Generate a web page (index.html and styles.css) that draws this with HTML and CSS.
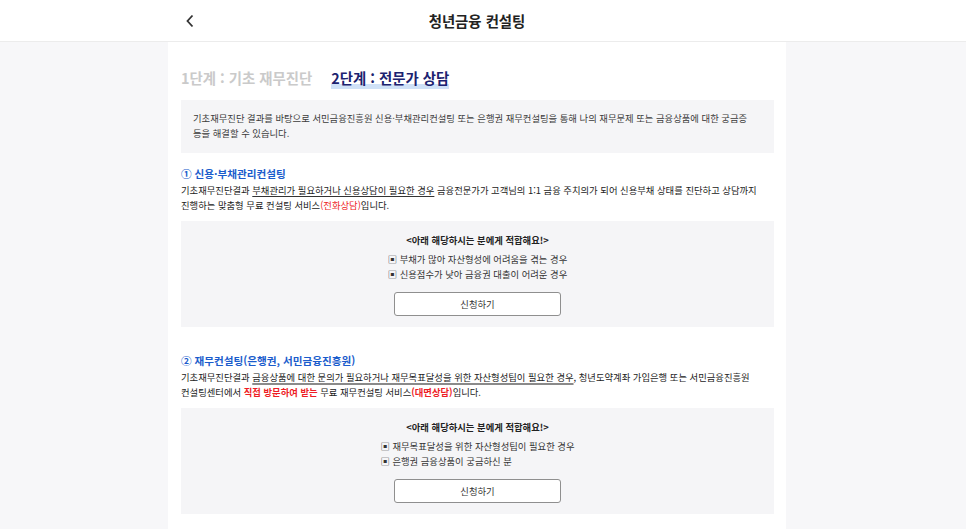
FILE: index.html
```html
<!DOCTYPE html>
<html lang="ko">
<head>
    <meta charset="UTF-8">
    <meta name="viewport" content="width=device-width, initial-scale=1.0">
    <title>청년금융 컨설팅</title>
    <link rel="stylesheet" href="styles.css">
</head>
<body>
    <header class="topbar">
        <div class="topbar-inner">
            <a class="back" href="#" aria-label="뒤로">
                <svg width="10" height="14" viewBox="0 0 10 14"><polyline points="7.5,1.5 2.5,7 7.5,12.5" fill="none" stroke="#333" stroke-width="1.8"/></svg>
            </a>
            <h1>청년금융 컨설팅</h1>
            <span></span>
        </div>
    </header>

    <div class="page">
        <main class="card">
            <div class="tabs">
                <span class="tab">1단계 : 기초 재무진단</span>
                <span class="tab active">2단계 : 전문가 상담</span>
            </div>

            <div class="intro">
                기초재무진단 결과를 바탕으로 서민금융진흥원 신용·부채관리컨설팅 또는 은행권 재무컨설팅을 통해 나의 재무문제 또는 금융상품에 대한 궁금증 등을 해결할 수 있습니다.
            </div>

            <section class="service">
                <h2>① 신용·부채관리컨설팅</h2>
                <p>기초재무진단결과 <u>부채관리가 필요하거나 신용상담이 필요한 경우</u> 금융전문가가 고객님의 1:1 금융 주치의가 되어 신용부채 상태를 진단하고 상담까지 진행하는 맞춤형 무료 컨설팅 서비스<span class="red">(전화상담)</span>입니다.</p>
                <div class="fit-box">
                    <h3>&lt;아래 해당하시는 분에게 적합해요!&gt;</h3>
                    <ul>
                        <li>▣ 부채가 많아 자산형성에 어려움을 겪는 경우</li>
                        <li>▣ 신용점수가 낮아 금융권 대출이 어려운 경우</li>
                    </ul>
                    <button type="button">신청하기</button>
                </div>
            </section>

            <section class="service second">
                <h2>② 재무컨설팅(은행권, 서민금융진흥원)</h2>
                <p>기초재무진단결과 <u class="gray">금융상품에 대한 문의가 필요하거나 재무목표달성을 위한 자산형성팁이 필요한 경우</u>, 청년도약계좌 가입은행 또는 서민금융진흥원 컨설팅센터에서 <span class="red bold">직접 방문하여 받는</span> 무료 재무컨설팅 서비스<span class="red bold">(대면상담)</span>입니다.</p>
                <div class="fit-box">
                    <h3>&lt;아래 해당하시는 분에게 적합해요!&gt;</h3>
                    <ul>
                        <li>▣ 재무목표달성을 위한 자산형성팁이 필요한 경우</li>
                        <li>▣ 은행권 금융상품이 궁금하신 분</li>
                    </ul>
                    <button type="button">신청하기</button>
                </div>
            </section>
        </main>
    </div>
</body>
</html>
```

FILE: styles.css
```css
body {
    margin: 0;
    background-color: #f7f7f9;
    font-family: "Noto Sans CJK KR", "Noto Sans", sans-serif;
    color: #333;
    word-break: keep-all;
}
.topbar {
    background: #fff;
    border-bottom: 1px solid #ececec;
    padding-right: 12px;
}
.topbar-inner {
    width: 618px;
    height: 41px;
    margin: 0 auto;
    padding: 0 17px;
    box-sizing: border-box;
    display: grid;
    grid-template-columns: 1fr auto 1fr;
    align-items: center;
}
.back {
    display: flex;
    align-items: center;
}
.topbar h1 {
    margin: 0;
    font-size: 14.4px;
    font-weight: bold;
    color: #222;
    line-height: 20px;
}
.page {
    padding-right: 12px;
}
.card {
    width: 618px;
    margin: 0 auto;
    background: #fff;
    padding: 27px 12px 40px 13px;
    box-sizing: border-box;
}
.tabs {
    display: flex;
    gap: 19px;
}
.tab {
    display: inline-block;
    font-size: 14.4px;
    font-weight: bold;
    line-height: 18px;
    padding-bottom: 2px;
    color: #cacaca;
}
.tab.active {
    color: #1c2270;
    background: linear-gradient(to top, #cfe1f7 5px, transparent 5px);
}
.intro {
    margin-top: 11px;
    background: #f5f5f7;
    padding: 11px 12px 12px;
    font-size: 9.33px;
    line-height: 15px;
    color: #3a3a3a;
}
.service h2 {
    margin: 13px 0 0;
    font-size: 10.6px;
    line-height: 15px;
    font-weight: bold;
    color: #1a5ccc;
}
.service.second h2 {
    margin-top: 26px;
}
.service p {
    margin: 2px 0 0;
    font-size: 9.33px;
    line-height: 15px;
    color: #222;
}
.service u {
    text-decoration-color: #333;
    text-underline-offset: 2px;
}
.service u.gray {
    text-decoration-color: #8a8a8a;
    text-decoration-thickness: 1.5px;
}
.red {
    color: #ee1c25;
}
.bold {
    font-weight: bold;
}
.fit-box {
    margin-top: 8px;
    background: #f5f5f7;
    padding: 12px 12px 11px;
    text-align: center;
}
.fit-box h3 {
    margin: 0;
    font-size: 9.33px;
    line-height: 15px;
    font-weight: bold;
    color: #222;
}
.fit-box ul {
    display: inline-block;
    margin: 4px 0 0;
    padding: 0;
    list-style: none;
    text-align: left;
    font-size: 9.33px;
    line-height: 15px;
    color: #333;
}
.fit-box button {
    display: block;
    width: 167px;
    height: 24px;
    margin: 9px auto 0;
    background: #fff;
    border: 1px solid #8f8f8f;
    border-radius: 3px;
    font-family: inherit;
    font-size: 9.33px;
    color: #333;
    cursor: pointer;
}
```
